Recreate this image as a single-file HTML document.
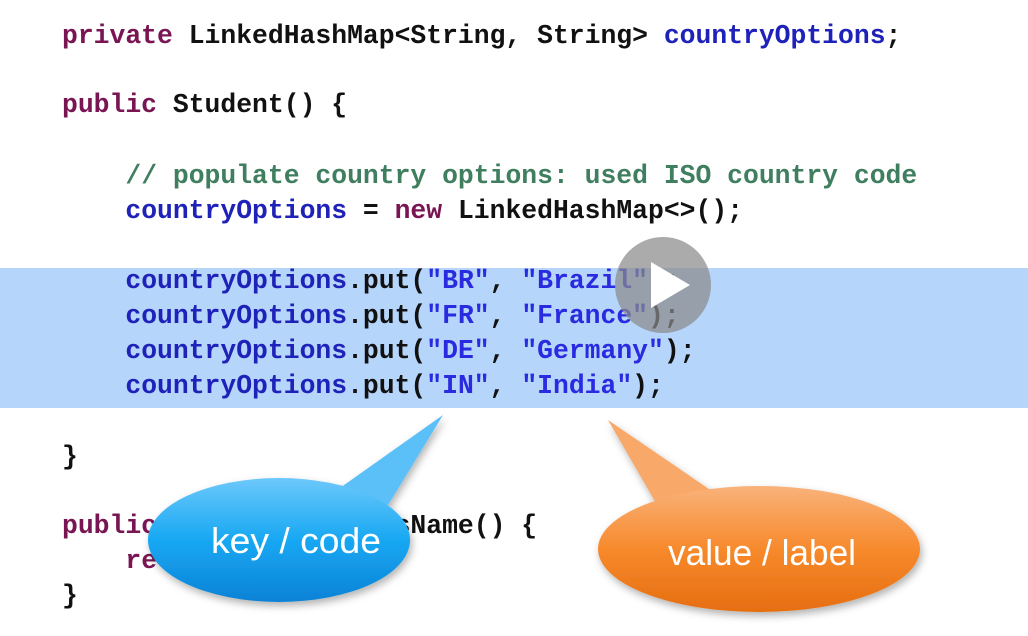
<!DOCTYPE html>
<html><head><style>
html,body{margin:0;padding:0;width:1028px;height:636px;overflow:hidden;background:#fff;}
.hl{position:absolute;left:0;top:268px;width:1028px;height:140px;background:#b5d5fb;}
.l{position:absolute;left:62px;font-family:"Liberation Mono",monospace;font-weight:bold;font-size:26.4px;line-height:30px;white-space:pre;color:#111;}
.k{color:#7a1553}.f{color:#1f22b8}.c{color:#3f7f5f}.s{color:#2a2ae0}
svg{position:absolute;left:0;top:0}
</style></head><body>
<div class="hl"></div>
<div class="l" style="top:21px"><span class="k">private</span> LinkedHashMap&lt;String, String&gt; <span class="f">countryOptions</span>;</div>
<div class="l" style="top:90px"><span class="k">public</span> Student() {</div>
<div class="l" style="top:161px">    <span class="c">// populate country options: used ISO country code</span></div>
<div class="l" style="top:196px">    <span class="f">countryOptions</span> = <span class="k">new</span> LinkedHashMap&lt;&gt;();</div>
<div class="l" style="top:266px">    <span class="f">countryOptions</span>.put(<span class="s">"BR"</span>, <span class="s">"Brazil"</span>);</div>
<div class="l" style="top:301px">    <span class="f">countryOptions</span>.put(<span class="s">"FR"</span>, <span class="s">"France"</span>);</div>
<div class="l" style="top:336px">    <span class="f">countryOptions</span>.put(<span class="s">"DE"</span>, <span class="s">"Germany"</span>);</div>
<div class="l" style="top:371px">    <span class="f">countryOptions</span>.put(<span class="s">"IN"</span>, <span class="s">"India"</span>);</div>
<div class="l" style="top:442px">}</div>
<div class="l" style="top:511px"><span class="k">public</span> String getCoursName() {</div>
<div class="l" style="top:546px">    <span class="k">return</span> country;</div>
<div class="l" style="top:581px">}</div>
<svg width="1028" height="636">
<defs>
<linearGradient id="b" x1="0" y1="0" x2="0" y2="1"><stop offset="0" stop-color="#6cc8fb"/><stop offset="0.5" stop-color="#18a8f3"/><stop offset="1" stop-color="#0a82d6"/></linearGradient>
<linearGradient id="o" x1="0" y1="0" x2="0" y2="1"><stop offset="0" stop-color="#f9b27a"/><stop offset="0.5" stop-color="#f78a2c"/><stop offset="1" stop-color="#e66e10"/></linearGradient>
<filter id="sh"><feDropShadow dx="2" dy="4" stdDeviation="4" flood-opacity="0.3"/></filter>
</defs>
<circle cx="663" cy="285" r="48" fill="#8a8a8a" fill-opacity="0.72"/>
<path d="M651 262 L651 308 L690 285 Z" fill="#fff"/>
<g filter="url(#sh)">
<path d="M443 415 L385 510 L330 495 Z" fill="#5cc0f8"/>
<ellipse cx="279" cy="540" rx="131" ry="62" fill="url(#b)"/>
<path d="M608 420 L725 500 L660 510 Z" fill="#f8a868"/>
<ellipse cx="759" cy="549" rx="161" ry="63" fill="url(#o)"/>
</g>
<text x="296" y="553" font-family="Liberation Sans Narrow,Liberation Sans,sans-serif" font-size="36" fill="#fff" text-anchor="middle" textLength="170" lengthAdjust="spacingAndGlyphs">key / code</text>
<text x="762" y="565" font-family="Liberation Sans Narrow,Liberation Sans,sans-serif" font-size="36" fill="#fff" text-anchor="middle" textLength="188" lengthAdjust="spacingAndGlyphs">value / label</text>
</svg>
</body></html>
